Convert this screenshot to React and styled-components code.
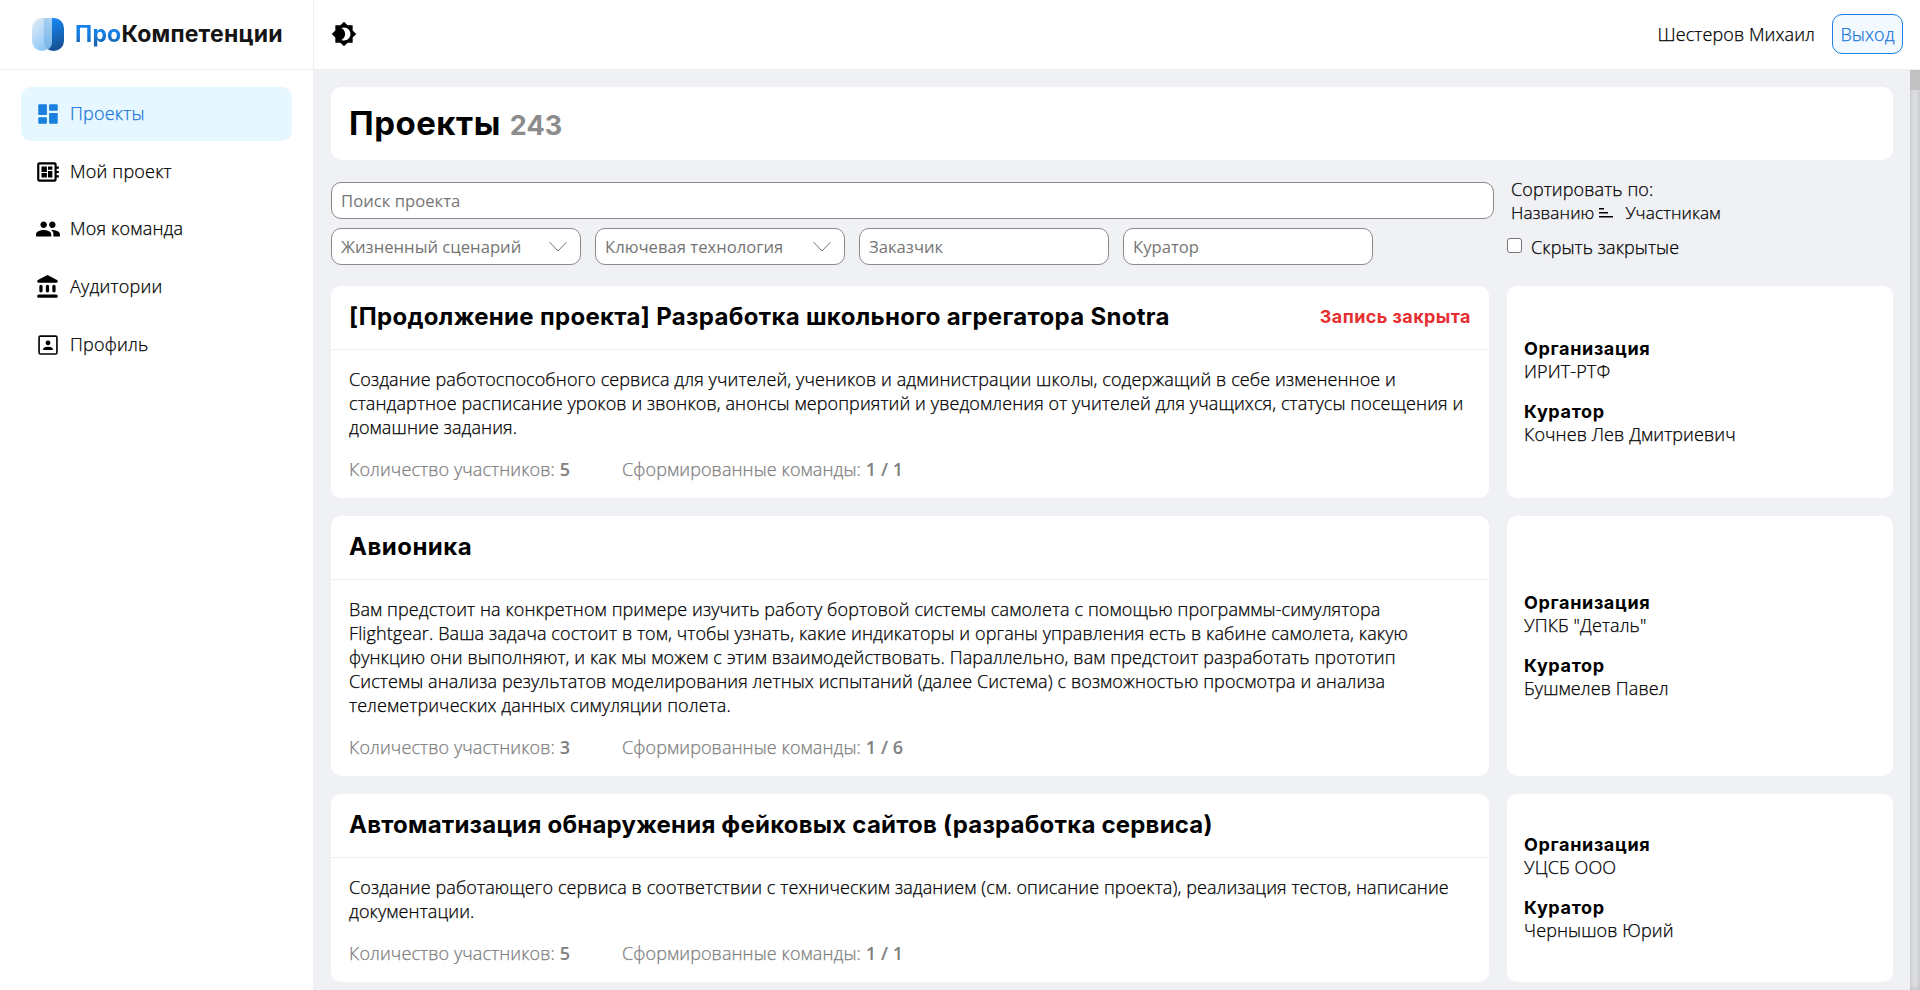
import React from "react";
import styled, { createGlobalStyle, css } from "styled-components";
import { MdDeveloperBoard, MdPeople, MdBrightness4 } from "react-icons/md";

const body = `"Open Sans", "Noto Sans", sans-serif`;

const heading = (size, line, tracking = 0) => css`
  font: 700 ${size}px/${line}px Inter, "Open Sans", sans-serif;
  letter-spacing: ${tracking}px;
  -webkit-text-stroke-width: 0;
`;

const Global = createGlobalStyle`
  * { box-sizing: border-box; }
  body {
    margin: 0;
    background: #fff;
    color: #000;
    font: 300 18px/24px ${body};
    letter-spacing: 0.1px;
    -webkit-text-stroke-width: 0.25px;
    overflow: hidden;
  }
  h1, h2, p, ul { margin: 0; padding: 0; }
`;

const Page = styled.div`
  display: grid;
  grid-template-columns: 314px 1fr;
  grid-template-rows: 70px 1fr;
  height: 990px;
  overflow: hidden;
`;
const Brand = styled.div`
  display: flex;
  align-items: center;
  gap: 11px;
  padding: 0 0 1px 32px;
  border-right: 1px solid #f0f0f1;
  border-bottom: 1px solid #f0f0f1;
`;
const BrandName = styled.span`
  ${heading(23, 28, 0.2)}
  color: #141414;
  white-space: nowrap;
`;
const BrandAccent = styled.span`
  background: linear-gradient(#1581e8 45%, #1a5a9c);
  background-clip: text;
  color: transparent;
`;
const TopBar = styled.header`
  display: flex;
  align-items: center;
  justify-content: space-between;
  padding: 0 17px 2px;
  border-bottom: 1px solid #f0f0f1;
  svg { display: block; }
`;
const User = styled.div`
  display: flex;
  align-items: center;
  gap: 17px;
`;
const Exit = styled.button`
  width: 71px;
  height: 40px;
  padding: 0;
  border: 1px solid #1a80e0;
  border-radius: 10px;
  background: #f2faff;
  color: #1a76d8;
  font: inherit;
  letter-spacing: inherit;
  white-space: nowrap;
`;
const Sidebar = styled.nav`
  display: flex;
  flex-direction: column;
  gap: 3.7px;
  padding: 17px 21px;
  border-right: 1px solid #f0f1f5;
`;
const NavItem = styled.a`
  display: flex;
  align-items: center;
  gap: 9px;
  height: 54px;
  padding-left: 14px;
  border-radius: 10px;
  background: ${(p) => (p.$active ? "#e6f7ff" : "transparent")};
  color: ${(p) => (p.$active ? "#1a76d8" : "#000")};
  svg { display: block; flex: none; }
`;
const NavText = styled.span`
  padding-bottom: 2px;
  letter-spacing: 0.2px;
`;
const Content = styled.div`
  display: flex;
  background: #f0f1f5;
  min-height: 0;
`;
const Main = styled.main`
  flex: 1;
  padding: 17px 17px 0;
  overflow: hidden;
`;
const Track = styled.div`
  width: 10px;
  background: #e1e2e6;
  box-shadow: inset 0 0 6px rgba(0, 0, 0, 0.2);
`;
const Thumb = styled.div`
  height: 20px;
  background: #c1c1c1;
`;
const TitleCard = styled.div`
  display: flex;
  align-items: baseline;
  gap: 9px;
  height: 73px;
  padding: 17px 18px;
  border-radius: 10px;
  background: #fff;
`;
const Title = styled.h1`
  ${heading(33, 39, 0.5)}
`;
const Count = styled.span`
  ${heading(27, 39)}
  color: #8c8c8c;
`;
const Filters = styled.section`
  display: grid;
  grid-template-columns: 1163px 1fr;
  column-gap: 17px;
  padding-top: 22px;
  height: 126px;
`;
const Fields = styled.div`
  display: flex;
  flex-direction: column;
  gap: 9px;
`;
const FieldRow = styled.div`
  display: flex;
  gap: 14px;
`;
const Field = styled.div`
  display: flex;
  align-items: center;
  justify-content: space-between;
  width: ${(p) => (p.$wide ? "1163px" : "250px")};
  height: 37px;
  padding: 0 13px 0 9px;
  border: 1px solid #8a8a8a;
  border-radius: 10px;
  background: #fff;
  color: #757575;
  font-size: 16.67px;
  font-weight: 400;
  letter-spacing: 0;
  -webkit-text-stroke-width: 0;
  white-space: nowrap;
`;
const Sorting = styled.div`
  margin-top: -5px;
`;
const SortOptions = styled.div`
  display: flex;
  align-items: center;
  font-size: 17.2px;
  svg { margin: 0 12px 0 5px; }
`;
const HideClosed = styled.label`
  display: flex;
  align-items: center;
  gap: 9px;
  margin: 10px 0 0 -4px;
`;
const Checkbox = styled.span`
  width: 15px;
  height: 15px;
  margin-bottom: 4px;
  border: 1px solid #767676;
  border-radius: 3px;
  background: #fff;
`;
const Row = styled.article`
  display: grid;
  grid-template-columns: 1158px 386px;
  gap: 18px;
  margin-bottom: 18px;
`;
const Card = styled.div`
  border-radius: 10px;
  background: #fff;
`;
const CardHead = styled.div`
  display: flex;
  align-items: center;
  justify-content: space-between;
  height: 64px;
  padding: 0 18px 2px;
  border-bottom: 1px solid #f0f0f1;
`;
const CardTitle = styled.h2`
  ${(p) => heading(24, 30, p.$tracking)}
  white-space: nowrap;
`;
const Closed = styled.span`
  ${heading(18, 24, 0.42)}
  color: #e72f31;
`;
const CardBody = styled.div`
  padding: 17px 18px 17px;
`;
const Description = styled.p`
  margin-bottom: 18px;
  white-space: pre;
`;
const Stats = styled.div`
  display: flex;
  gap: 52px;
  color: #808080;
`;
const StatValue = styled.b`
  font-weight: 600;
  -webkit-text-stroke-width: 0;
`;
const SideCard = styled(Card)`
  display: flex;
  flex-direction: column;
  justify-content: center;
  gap: 18px;
  padding: 0 17px;
`;
const Label = styled.div`
  ${heading(18, 22, 0.65)}
`;
const Value = styled.div`
  line-height: 23px;
`;

const Logo = () => (
  <svg width="32" height="33" viewBox="0 0 32 33">
    <defs>
      <linearGradient id="lgLight" x1="0" y1="0" x2="0.7" y2="1">
        <stop offset="0" stopColor="#e6eff7" />
        <stop offset="1" stopColor="#86c3f5" />
      </linearGradient>
      <linearGradient id="lgDark" x1="0" y1="0" x2="0.3" y2="1">
        <stop offset="0" stopColor="#1890ff" />
        <stop offset="1" stopColor="#15539a" />
      </linearGradient>
      <linearGradient id="lgMid" x1="0" y1="0" x2="0" y2="1">
        <stop offset="0" stopColor="#a7d0f3" />
        <stop offset="1" stopColor="#77b4e6" />
      </linearGradient>
    </defs>
    <path d="M12 0h10a10 10 0 0 1 10 10v13a10 10 0 0 1-10 10c-6 0-10-4-10-10z" fill="url(#lgDark)" />
    <path d="M10 0h10v23a10 10 0 0 1-20 0V10A10 10 0 0 1 10 0z" fill="url(#lgLight)" />
    <path d="M12 0h8v23c0 4-1.500 7-4 8.500-2.500-2-4-4.500-4-8.500z" fill="url(#lgMid)" />
  </svg>
);
const DashboardIcon = () => (
  <svg width="26" height="26" viewBox="0 0 24 24" fill="#1a80e0">
    <path d="M4 13h6c.55 0 1-.45 1-1V4c0-.55-.45-1-1-1H4c-.55 0-1 .45-1 1v8c0 .55.45 1 1 1zm0 8h6c.55 0 1-.45 1-1v-4c0-.55-.45-1-1-1H4c-.55 0-1 .45-1 1v4c0 .55.45 1 1 1zm10 0h6c.55 0 1-.45 1-1v-8c0-.55-.45-1-1-1h-6c-.55 0-1 .45-1 1v8c0 .55.45 1 1 1zM13 4v4c0 .55.45 1 1 1h6c.55 0 1-.45 1-1V4c0-.55-.45-1-1-1h-6c-.55 0-1 .45-1 1z" />
  </svg>
);
const BankIcon = () => (
  <svg width="26" height="26" viewBox="0 0 24 24">
    <path d="M4 11.500v4c0 .83.67 1.500 1.500 1.500S7 16.330 7 15.500v-4c0-.83-.67-1.500-1.500-1.500S4 10.670 4 11.500zm6 0v4c0 .83.67 1.500 1.500 1.500s1.500-.67 1.500-1.500v-4c0-.83-.67-1.500-1.500-1.500s-1.500.67-1.500 1.500zM3.500 22h16c.83 0 1.500-.67 1.500-1.500s-.67-1.500-1.500-1.500h-16c-.83 0-1.500.67-1.500 1.500S2.670 22 3.500 22zM16 11.500v4c0 .83.67 1.500 1.500 1.500s1.500-.67 1.500-1.500v-4c0-.83-.67-1.500-1.500-1.500s-1.500.67-1.500 1.500zM10.570 1.490l-7.900 4.160c-.41.21-.67.64-.67 1.100C2 7.440 2.560 8 3.250 8h16.510C20.440 8 21 7.440 21 6.750c0-.46-.26-.89-.67-1.100l-7.900-4.160c-.58-.31-1.280-.31-1.860 0z" />
  </svg>
);
const ProfileIcon = () => (
  <svg width="26" height="26" viewBox="0 0 24 24">
    <path fillRule="evenodd" d="M5 3h14a2 2 0 0 1 2 2v14a2 2 0 0 1-2 2H5a2 2 0 0 1-2-2V5a2 2 0 0 1 2-2zm-.5 1.500v15h15v-15z" />
    <circle cx="12" cy="10" r="2.250" />
    <path d="M7.500 16.500v-.75c0-1.500 3-2.250 4.500-2.250s4.500.75 4.500 2.250v.75z" />
  </svg>
);
const Chevron = () => (
  <svg width="18" height="11" viewBox="0 0 18 11" fill="none" stroke="#757575" strokeWidth="1">
    <path d="M.5 1l8.500 9L17.500 1" />
  </svg>
);
const SortIcon = () => (
  <svg width="14" height="10" viewBox="0 0 14 10">
    <path d="M0 0h5v1.600H0zM0 4h9v1.600H0zM0 8h14v1.600H0z" />
  </svg>
);

const nav = [
  ["Проекты", DashboardIcon],
  ["Мой проект", () => <MdDeveloperBoard size={26} />],
  ["Моя команда", () => <MdPeople size={26} />],
  ["Аудитории", BankIcon],
  ["Профиль", ProfileIcon],
];

const projects = [
  {
    title: "[Продолжение проекта] Разработка школьного агрегатора Snotra",
    tracking: 0.31,
    closed: true,
    text: [
      "Создание работоспособного сервиса для учителей, учеников и администрации школы, содержащий в себе измененное и",
      "стандартное расписание уроков и звонков, анонсы мероприятий и уведомления от учителей для учащихся, статусы посещения и",
      "домашние задания.",
    ],
    members: "5",
    teams: "1 / 1",
    org: "ИРИТ-РТФ",
    curator: "Кочнев Лев Дмитриевич",
  },
  {
    title: "Авионика",
    tracking: 0.5,
    text: [
      "Вам предстоит на конкретном примере изучить работу бортовой системы самолета с помощью программы-симулятора",
      "Flightgear. Ваша задача состоит в том, чтобы узнать, какие индикаторы и органы управления есть в кабине самолета, какую",
      "функцию они выполняют, и как мы можем с этим взаимодействовать. Параллельно, вам предстоит разработать прототип",
      "Системы анализа результатов моделирования летных испытаний (далее Система) с возможностью просмотра и анализа",
      "телеметрических данных симуляции полета.",
    ],
    members: "3",
    teams: "1 / 6",
    org: 'УПКБ "Деталь"',
    curator: "Бушмелев Павел",
  },
  {
    title: "Автоматизация обнаружения фейковых сайтов (разработка сервиса)",
    tracking: 0.21,
    text: [
      "Создание работающего сервиса в соответствии с техническим заданием (см. описание проекта), реализация тестов, написание",
      "документации.",
    ],
    members: "5",
    teams: "1 / 1",
    org: "УЦСБ ООО",
    curator: "Чернышов Юрий",
  },
];

export default function App() {
  return (
    <Page>
      <Global />
      <Brand>
        <Logo />
        <BrandName>
          <BrandAccent>Про</BrandAccent>Компетенции
        </BrandName>
      </Brand>
      <TopBar>
        <MdBrightness4 size={26} />
        <User>
          <span>Шестеров Михаил</span>
          <Exit>Выход</Exit>
        </User>
      </TopBar>
      <Sidebar>
        {nav.map(([label, Icon], i) => (
          <NavItem key={label} $active={i === 0}>
            <Icon />
            <NavText>{label}</NavText>
          </NavItem>
        ))}
      </Sidebar>
      <Content>
        <Main>
          <TitleCard>
            <Title>Проекты</Title>
            <Count>243</Count>
          </TitleCard>
          <Filters>
            <Fields>
              <Field $wide>Поиск проекта</Field>
              <FieldRow>
                <Field>Жизненный сценарий<Chevron /></Field>
                <Field>Ключевая технология<Chevron /></Field>
                <Field>Заказчик</Field>
                <Field>Куратор</Field>
              </FieldRow>
            </Fields>
            <Sorting>
              <div>Сортировать по:</div>
              <SortOptions>
                <span>Названию</span>
                <SortIcon />
                <span>Участникам</span>
              </SortOptions>
              <HideClosed>
                <Checkbox />
                <span>Скрыть закрытые</span>
              </HideClosed>
            </Sorting>
          </Filters>
          {projects.map((p) => (
            <Row key={p.title}>
              <Card>
                <CardHead>
                  <CardTitle $tracking={p.tracking}>{p.title}</CardTitle>
                  {p.closed && <Closed>Запись закрыта</Closed>}
                </CardHead>
                <CardBody>
                  <Description>{p.text.join("\n")}</Description>
                  <Stats>
                    <span>Количество участников: <StatValue>{p.members}</StatValue></span>
                    <span>Сформированные команды: <StatValue>{p.teams}</StatValue></span>
                  </Stats>
                </CardBody>
              </Card>
              <SideCard>
                <div>
                  <Label>Организация</Label>
                  <Value>{p.org}</Value>
                </div>
                <div>
                  <Label>Куратор</Label>
                  <Value>{p.curator}</Value>
                </div>
              </SideCard>
            </Row>
          ))}
        </Main>
        <Track>
          <Thumb />
        </Track>
      </Content>
    </Page>
  );
}
